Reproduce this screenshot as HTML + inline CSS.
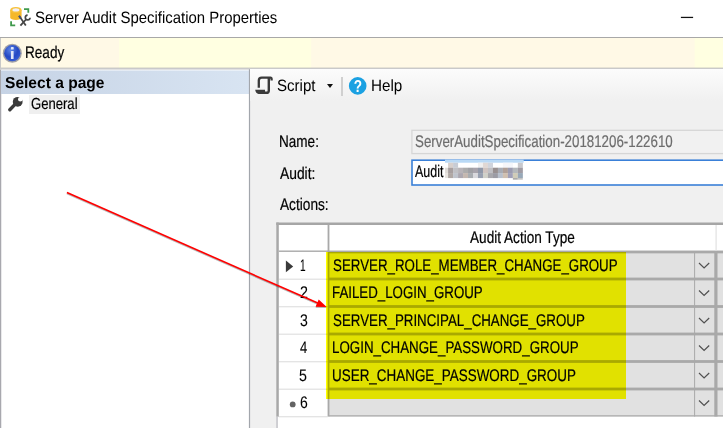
<!DOCTYPE html>
<html><head><meta charset="utf-8">
<style>
html,body{margin:0;padding:0;}
body{width:723px;height:428px;overflow:hidden;background:#fff;position:relative;font-family:"Liberation Sans",sans-serif;color:#000;}
.a{position:absolute;}
.t{position:absolute;white-space:nowrap;transform-origin:0 0;line-height:1;font-size:15px;text-rendering:geometricPrecision;-webkit-text-stroke:0.2px currentColor;}
svg{position:absolute;left:0;top:0;}
svg text{font-family:"Liberation Sans",sans-serif;}
</style></head><body>
<div class="t" id="title" style="left:34.80px;top:10px;font-size:16.4px;transform:scaleX(0.9107);-webkit-text-stroke:0;">Server Audit Specification Properties</div>
<svg width="723" height="428" viewBox="0 0 723 428"><rect x="680.9" y="16.8" width="12.2" height="1.25" fill="#111"/></svg>
<div class="a" style="left:0;top:37px;width:723px;height:1px;background:#a8a8a8"></div>
<div class="a" style="left:1px;top:38px;width:722px;height:30px;background:#fff9e6"></div>
<svg width="723" height="428" viewBox="0 0 723 428"><rect x="119" y="38" width="192.2" height="30" fill="#ffffe1"/><rect x="694.7" y="38" width="30" height="30" fill="#ffffe1"/><rect x="0" y="67.7" width="723" height="1" fill="#b0b0b0"/><rect x="0" y="68.7" width="723" height="0.9" fill="#cdcdd0"/></svg>
<div class="a" style="left:0;top:38px;width:1px;height:30px;background:#c8c8c8"></div>
<div class="t" id="ready" style="left:25.45px;top:45px;font-size:16.8px;transform:scaleX(0.8094);">Ready</div>
<svg width="723" height="428" viewBox="0 0 723 428"><rect x="0" y="69.6" width="1.25" height="360" fill="#a8a8ae"/></svg>
<div class="a" style="left:1px;top:70px;width:248px;height:24px;background:linear-gradient(90deg,#c6d3e5,#d8e4f2)"></div>
<div class="a" style="left:1px;top:70px;width:248px;height:1px;background:rgba(255,255,255,0.45)"></div>
<div class="t" id="sel" style="left:4.95px;top:76px;font-size:15.9px;transform:scaleX(0.9792);-webkit-text-stroke:0;font-weight:bold;">Select a page</div>
<div class="a" style="left:29px;top:95px;width:51px;height:19px;background:#efefef"></div>
<div class="t" id="gen" style="left:30.55px;top:97px;font-size:16px;transform:scaleX(0.8177);">General</div>
<div class="a" style="left:250px;top:69px;width:473px;height:359px;background:#f0f0f0"></div>
<svg width="723" height="428" viewBox="0 0 723 428"><rect x="248.9" y="69.2" width="1.2" height="360" fill="#a2a6ac"/></svg>
<div class="a" style="left:250px;top:69px;width:473px;height:32px;background:linear-gradient(#fcfcfc,#f0f0f0)"></div>
<div class="t" id="script" style="left:277.19px;top:78px;font-size:16.4px;transform:scaleX(0.9175);-webkit-text-stroke:0;">Script</div>
<div class="a" style="left:327px;top:84.3px;width:0;height:0;border-left:3.7px solid transparent;border-right:3.7px solid transparent;border-top:4.3px solid #111"></div>
<div class="a" style="left:341px;top:77px;width:2px;height:19px;background:#d0d0d0"></div>
<div class="t" id="help" style="left:371.21px;top:78px;font-size:16.4px;transform:scaleX(0.9296);-webkit-text-stroke:0;">Help</div>
<div class="t" id="lname" style="left:279.36px;top:134px;font-size:16.8px;transform:scaleX(0.8073);">Name:</div>
<div class="t" id="laudit" style="left:279.74px;top:166px;font-size:16.8px;transform:scaleX(0.8241);">Audit:</div>
<div class="t" id="lact" style="left:279.74px;top:197px;font-size:16.8px;transform:scaleX(0.8147);">Actions:</div>
<svg width="723" height="428" viewBox="0 0 723 428"><rect x="411.9" y="130.3" width="330" height="23.3" fill="#f1f1f1" stroke="#d6d6d6" stroke-width="1.3"/><rect x="412" y="160.2" width="330" height="24.8" fill="#fff" stroke="#3a80d8" stroke-width="1.6"/></svg>
<div class="t" id="vname" style="left:414.70px;top:134px;font-size:16.8px;transform:scaleX(0.7938);color:#6d6d6d;">ServerAuditSpecification-20181206-122610</div>
<div class="t" id="vaudit" style="left:415.16px;top:164px;font-size:16.8px;transform:scaleX(0.7420);">Audit</div>
<svg width="723" height="428" viewBox="0 0 723 428">
<rect x="444.98" y="159.61" width="78.70" height="3.11" fill="#b9d9f5"/>
<rect x="448.09" y="162.72" width="5.03" height="5.03" fill="#d8d0cc"/>
<rect x="453.08" y="162.72" width="5.03" height="5.03" fill="#c8ccd4"/>
<rect x="477.98" y="162.72" width="5.03" height="5.03" fill="#f0f0f0"/>
<rect x="482.96" y="162.72" width="5.03" height="5.03" fill="#e0d8d4"/>
<rect x="487.95" y="162.72" width="5.03" height="5.03" fill="#d0d4dc"/>
<rect x="502.89" y="162.72" width="5.03" height="5.03" fill="#f6f6f9"/>
<rect x="507.87" y="162.72" width="5.03" height="5.03" fill="#f4f6fa"/>
<rect x="517.83" y="162.72" width="5.03" height="5.03" fill="#c8c8cc"/>
<rect x="444.98" y="167.70" width="3.16" height="5.40" fill="#e0dcd8"/>
<rect x="448.09" y="167.70" width="5.03" height="5.40" fill="#a8a0a0"/>
<rect x="453.08" y="167.70" width="5.03" height="5.40" fill="#c0c0c4"/>
<rect x="458.06" y="167.70" width="5.03" height="5.40" fill="#b8b4b8"/>
<rect x="463.04" y="167.70" width="5.03" height="5.40" fill="#acacac"/>
<rect x="468.02" y="167.70" width="5.03" height="5.40" fill="#a0a0a4"/>
<rect x="473.00" y="167.70" width="5.03" height="5.40" fill="#a8a4ac"/>
<rect x="477.98" y="167.70" width="5.03" height="5.40" fill="#9098a8"/>
<rect x="482.96" y="167.70" width="5.03" height="5.40" fill="#d0c4c0"/>
<rect x="487.95" y="167.70" width="5.03" height="5.40" fill="#c0c0c4"/>
<rect x="492.93" y="167.70" width="5.03" height="5.40" fill="#989090"/>
<rect x="497.91" y="167.70" width="5.03" height="5.40" fill="#a8acb4"/>
<rect x="502.89" y="167.70" width="5.03" height="5.40" fill="#b0a098"/>
<rect x="507.87" y="167.70" width="5.03" height="5.40" fill="#9c9cb0"/>
<rect x="512.85" y="167.70" width="5.03" height="5.40" fill="#b4b8bc"/>
<rect x="517.83" y="167.70" width="5.03" height="5.40" fill="#a09ca4"/>
<rect x="444.98" y="173.06" width="3.16" height="5.03" fill="#e8e4e0"/>
<rect x="448.09" y="173.06" width="5.03" height="5.03" fill="#b0a8a4"/>
<rect x="453.08" y="173.06" width="5.03" height="5.03" fill="#c0c4cc"/>
<rect x="458.06" y="173.06" width="5.03" height="5.03" fill="#aca8b0"/>
<rect x="463.04" y="173.06" width="5.03" height="5.03" fill="#c4b8b0"/>
<rect x="468.02" y="173.06" width="5.03" height="5.03" fill="#a8acb0"/>
<rect x="473.00" y="173.06" width="5.03" height="5.03" fill="#d8d8dc"/>
<rect x="477.98" y="173.06" width="5.03" height="5.03" fill="#98a0b0"/>
<rect x="482.96" y="173.06" width="5.03" height="5.03" fill="#d0d0c8"/>
<rect x="487.95" y="173.06" width="5.03" height="5.03" fill="#a8a8ac"/>
<rect x="492.93" y="173.06" width="5.03" height="5.03" fill="#9c9ca4"/>
<rect x="497.91" y="173.06" width="5.03" height="5.03" fill="#b8c0cc"/>
<rect x="502.89" y="173.06" width="5.03" height="5.03" fill="#d0c0b0"/>
<rect x="507.87" y="173.06" width="5.03" height="5.03" fill="#a0a0b8"/>
<rect x="512.85" y="173.06" width="5.03" height="5.03" fill="#d0ccb8"/>
<rect x="517.83" y="173.06" width="5.03" height="5.03" fill="#98a8b8"/>
<rect x="512.85" y="178.04" width="4.98" height="1.62" fill="#a8a8a8"/>
<rect x="517.83" y="178.04" width="4.98" height="1.62" fill="#c0c0c0"/>
</svg>
<svg width="723" height="428" viewBox="0 0 723 428">
<defs><radialGradient id="ig" cx="0.4" cy="0.3" r="0.8"><stop offset="0" stop-color="#5d86e6"/><stop offset="0.55" stop-color="#2448c4"/><stop offset="1" stop-color="#3a62d8"/></radialGradient></defs>
<path d="M10.2 10 L10.2 17.6 A5.7 2.4 0 0 0 21.6 17.6 L21.6 10 Z" fill="#f5b82a"/>
<ellipse cx="15.9" cy="10" rx="5.7" ry="3.1" fill="#f7c13a"/>
<ellipse cx="15.9" cy="9.9" rx="3.5" ry="1.7" fill="#f1eff6"/>
<path d="M24 8.2 H29.2 V12.8 H27.4 V10 H24 Z" fill="#3f9a4d"/>
<path d="M10.2 21.3 H12 V24.4 H15.2 V26.2 H10.2 Z" fill="#3f9a4d"/>
<path d="M19.2 16 L25.8 25.4" stroke="#454545" stroke-width="1.7" fill="none"/>
<path d="M19 15.8 L20.6 18.2" stroke="#3d4f80" stroke-width="1.9" fill="none"/>
<path d="M20.4 25.6 L26.4 19" stroke="#454545" stroke-width="1.8" fill="none"/>
<path d="M27.6 15.1 A2.4 2.4 0 1 0 30.1 17.7" stroke="#454545" stroke-width="1.7" fill="none"/>
<circle cx="12.3" cy="53.2" r="9.5" fill="#a0a0a6"/>
<circle cx="12.3" cy="53.2" r="8.1" fill="url(#ig)"/>
<rect x="10.9" y="47.1" width="2.8" height="2.4" rx="0.6" fill="#dfe6f8"/>
<rect x="10.9" y="51" width="2.7" height="8" rx="0.5" fill="#dfe6f8"/>
<path d="M9.8 109.8 L16 103.4" stroke="#3a3a3a" stroke-width="3.4" stroke-linecap="round" fill="none"/>
<circle cx="17.7" cy="101.8" r="4.9" fill="#3a3a3a"/>
<circle cx="20.3" cy="99.3" r="2.3" fill="#fff"/>
<path d="M19.6 100 L24 95.5" stroke="#fff" stroke-width="3.2" fill="none"/>
<path d="M258.8 87.8 V80.6 Q258.8 77.7 261.7 77.7 H270.4 Q271.6 77.7 271.6 79.2 V80.6" stroke="#3a3a3a" stroke-width="2.3" fill="none"/>
<path d="M268.8 78 V90.4 Q268.8 92.8 266.4 92.8 H262" stroke="#3a3a3a" stroke-width="2.4" fill="none"/>
<path d="M255.2 89.8 H265 V93.9 H258.6 Q255.8 93.9 255.2 89.8 Z" fill="#3a3a3a"/>
<circle cx="357.7" cy="85.9" r="8.8" fill="#1ba1e2"/>
<text transform="translate(357.8 92) scale(0.85 1)" font-size="16" font-weight="bold" fill="#fff" text-anchor="middle">?</text>
</svg>
<svg width="723" height="428" viewBox="0 0 723 428">
<rect x="277" y="223" width="446" height="205" fill="#fff"/>
<rect x="329" y="251.5" width="394" height="27.5" fill="#e1e1e1"/>
<rect x="329" y="279.0" width="394" height="27.5" fill="#e1e1e1"/>
<rect x="329" y="306.5" width="394" height="27.5" fill="#e1e1e1"/>
<rect x="329" y="334.0" width="394" height="27.5" fill="#e1e1e1"/>
<rect x="329" y="361.5" width="394" height="27.5" fill="#e1e1e1"/>
<rect x="329" y="389.0" width="394" height="27.5" fill="#e1e1e1"/>
<rect x="328.5" y="250.54999999999998" width="394.5" height="2.8" fill="#a9a9a9"/>
<rect x="328.5" y="277.6" width="394.5" height="2.8" fill="#a9a9a9"/>
<rect x="328.5" y="305.1" width="394.5" height="2.8" fill="#a9a9a9"/>
<rect x="328.5" y="332.6" width="394.5" height="2.8" fill="#a9a9a9"/>
<rect x="328.5" y="360.1" width="394.5" height="2.8" fill="#a9a9a9"/>
<rect x="328.5" y="387.6" width="394.5" height="2.8" fill="#a9a9a9"/>
<rect x="328.5" y="415.25" width="394.5" height="1.25" fill="#a9a9a9"/>
<rect x="278.75" y="278.6" width="49" height="1.25" fill="#e2e2e2"/>
<rect x="278.75" y="306.1" width="49" height="1.25" fill="#e2e2e2"/>
<rect x="278.75" y="333.6" width="49" height="1.25" fill="#e2e2e2"/>
<rect x="278.75" y="361.1" width="49" height="1.25" fill="#e2e2e2"/>
<rect x="278.75" y="388.6" width="49" height="1.25" fill="#e2e2e2"/>
<rect x="278.75" y="416.1" width="49" height="1.25" fill="#e2e2e2"/>
<rect x="278.75" y="250.5" width="50" height="1.4" fill="#a9a9a9"/>
<rect x="327.6" y="225" width="1.8" height="191.5" fill="#a9a9a9"/>
<rect x="694.1" y="251.5" width="1" height="165.0" fill="#a9a9a9"/>
<rect x="714.3" y="251.5" width="3.2" height="165.0" fill="#a9a9a9"/>
<rect x="715.5" y="225" width="1.2" height="25.5" fill="#e2e2e2"/>
<rect x="276.25" y="222.5" width="447" height="2.5" fill="#a6a6a6"/>
<rect x="276.3" y="222.5" width="2.5" height="194.2" fill="#a8a8a8"/>
<rect x="276.3" y="416.7" width="1.5" height="12" fill="#c2c2c8"/>
<path d="M699 262.95 L704.1 267.95 L709.2 262.95" fill="none" stroke="#505050" stroke-width="1.2"/>
<path d="M699 290.45 L704.1 295.45 L709.2 290.45" fill="none" stroke="#505050" stroke-width="1.2"/>
<path d="M699 317.95 L704.1 322.95 L709.2 317.95" fill="none" stroke="#505050" stroke-width="1.2"/>
<path d="M699 345.45 L704.1 350.45 L709.2 345.45" fill="none" stroke="#505050" stroke-width="1.2"/>
<path d="M699 372.95 L704.1 377.95 L709.2 372.95" fill="none" stroke="#505050" stroke-width="1.2"/>
<path d="M699 400.45 L704.1 405.45 L709.2 400.45" fill="none" stroke="#505050" stroke-width="1.2"/>
</svg>
<div class="t" id="hdr" style="left:470.14px;top:230px;font-size:16.8px;transform:scaleX(0.8104);">Audit Action Type</div>
<div class="t" id="r1" style="left:332.70px;top:258px;font-size:16.8px;transform:scaleX(0.7934);">SERVER_ROLE_MEMBER_CHANGE_GROUP</div>
<div class="t" id="r2" style="left:332.28px;top:285px;font-size:16.8px;transform:scaleX(0.7922);">FAILED_LOGIN_GROUP</div>
<div class="t" id="r3" style="left:332.70px;top:313px;font-size:16.8px;transform:scaleX(0.7935);">SERVER_PRINCIPAL_CHANGE_GROUP</div>
<div class="t" id="r4" style="left:332.27px;top:340px;font-size:16.8px;transform:scaleX(0.7949);">LOGIN_CHANGE_PASSWORD_GROUP</div>
<div class="t" id="r5" style="left:332.31px;top:368px;font-size:16.8px;transform:scaleX(0.8008);">USER_CHANGE_PASSWORD_GROUP</div>
<div class="t" id="n1" style="left:299.99px;top:258px;font-size:16.8px;transform:scaleX(0.6058);-webkit-text-stroke:0.1px currentColor;">1</div>
<div class="t" id="n2" style="left:299.52px;top:285px;font-size:16.8px;transform:scaleX(0.8487);-webkit-text-stroke:0.1px currentColor;">2</div>
<div class="t" id="n3" style="left:299.59px;top:313px;font-size:16.8px;transform:scaleX(0.8377);-webkit-text-stroke:0.1px currentColor;">3</div>
<div class="t" id="n4" style="left:299.85px;top:340px;font-size:16.8px;transform:scaleX(0.7773);-webkit-text-stroke:0.1px currentColor;">4</div>
<div class="t" id="n5" style="left:299.47px;top:368px;font-size:16.8px;transform:scaleX(0.8457);-webkit-text-stroke:0.1px currentColor;">5</div>
<div class="t" id="n6" style="left:299.51px;top:395px;font-size:16.8px;transform:scaleX(0.8321);-webkit-text-stroke:0.1px currentColor;">6</div>
<svg width="723" height="428" viewBox="0 0 723 428"><path d="M285.9 260.5 L293.2 266.4 L285.9 272.3 Z" fill="#3a3a3a"/><circle cx="292.7" cy="404.4" r="2.9" fill="#636363"/></svg>
<div class="a" style="left:326px;top:251.5px;width:300.3px;height:147.3px;background:#ffff00;mix-blend-mode:multiply"></div>
<svg width="723" height="428" viewBox="0 0 723 428" style="filter:drop-shadow(0.6px 1.2px 0.7px rgba(0,0,0,0.28))">
<line x1="66.9" y1="192.6" x2="320" y2="304.1" stroke="#ff0000" stroke-width="1.6"/>
<path d="M326.7 307 L315.6 306.8 L318.7 299.5 Z" fill="#ff0000"/>
</svg>
</body></html>
